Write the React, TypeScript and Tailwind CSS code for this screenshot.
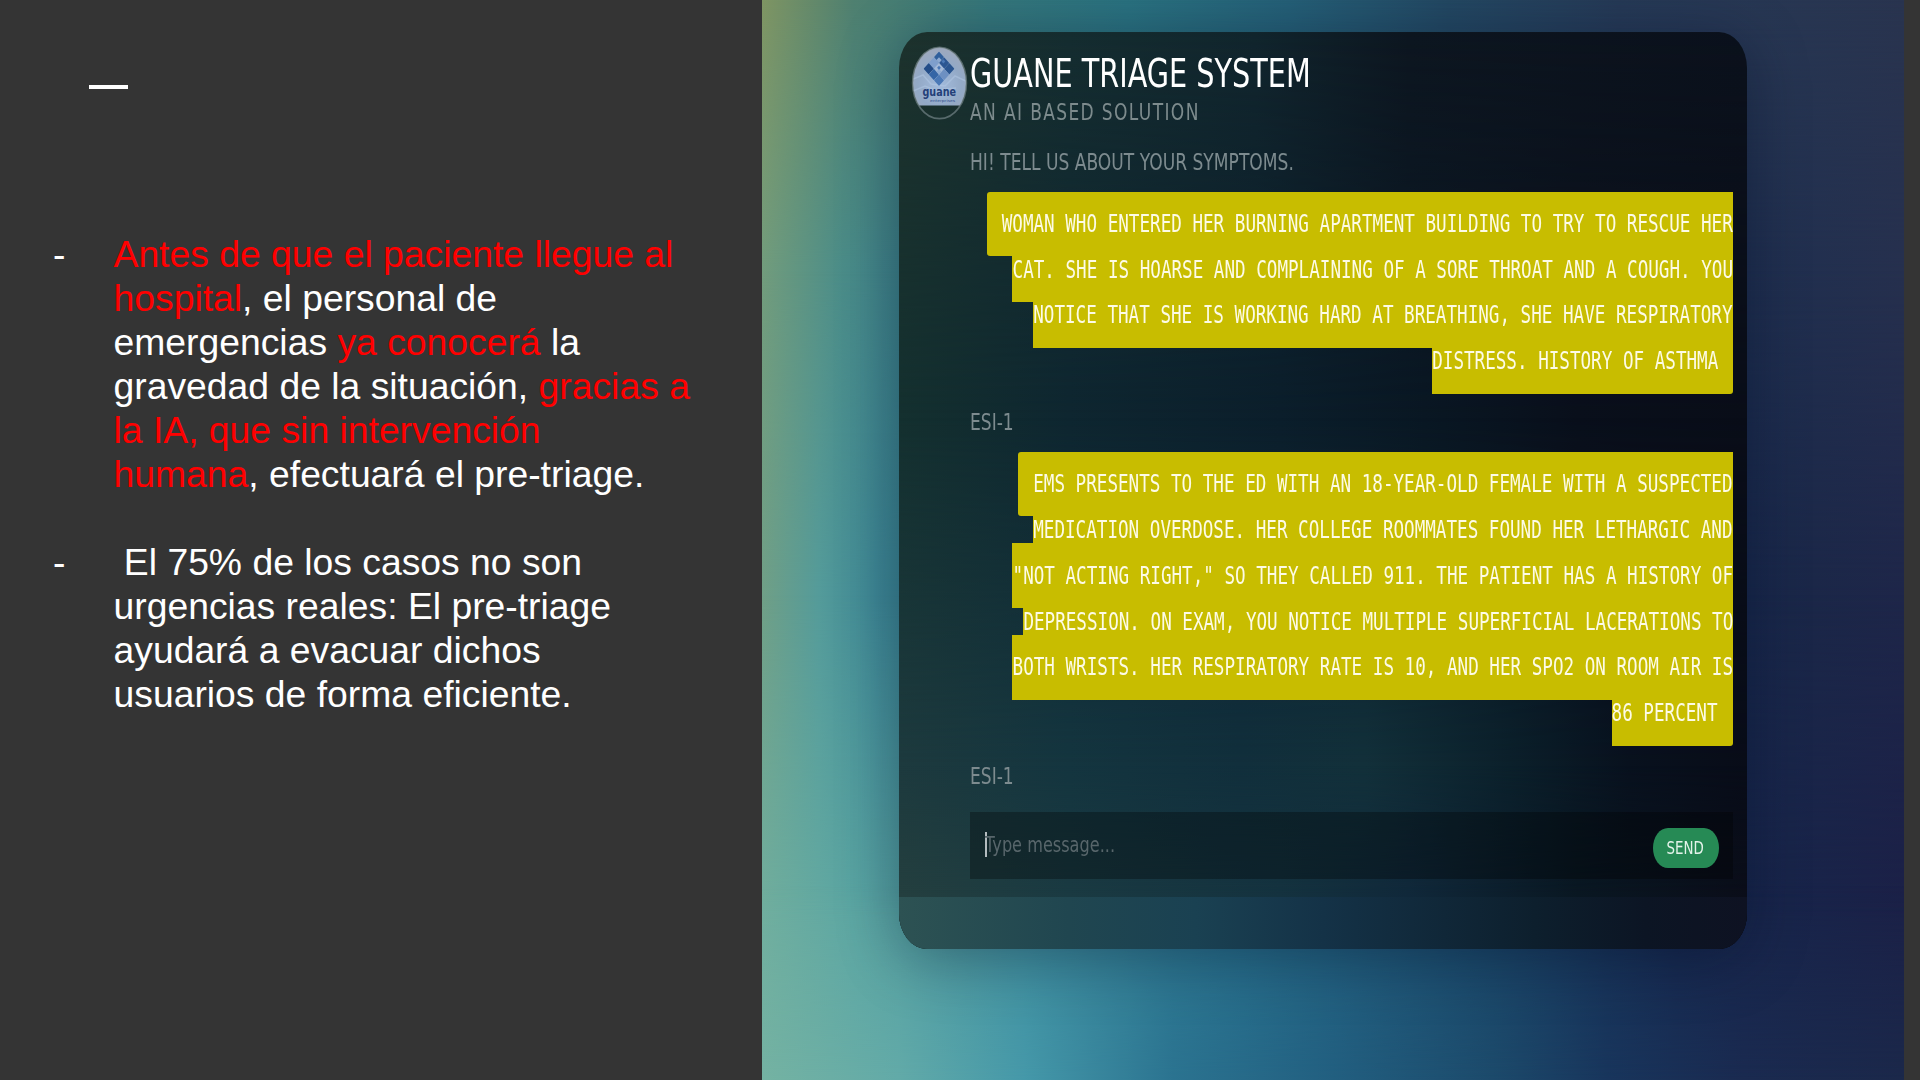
import React from "react";

const SANS = "font-['DejaVu_Sans',sans-serif]";

/* Horizontal colour rows, blended vertically through masks */
function SlideBackdrop() {
  return (
    <div className="absolute inset-0">
      <div className="absolute inset-0 bg-[linear-gradient(to_right,#7f9563_0%,#4f8070_8%,#35777b_20%,#2a7280_32%,#256078_46%,#234863_60%,#263a57_75%,#29344f_100%)]" />
      <div className="absolute inset-0 bg-[linear-gradient(to_right,#729c7c_0%,#4b8d89_7%,#2f7488_16%,#1f5a70_40%,#1c3a58_70%,#1e2f50_85%,#26304e_100%)] [mask-image:linear-gradient(to_bottom,transparent_0%,black_25%)]" />
      <div className="absolute inset-0 bg-[linear-gradient(to_right,#709f86_0%,#549b9a_5%,#3d8795_10%,#2b7088_20%,#1c4a60_50%,#17284c_85%,#1b2748_92%,#1e2649_100%)] [mask-image:linear-gradient(to_bottom,transparent_25%,black_55%)]" />
      <div className="absolute inset-0 bg-[linear-gradient(to_right,#70ae9e_0%,#5ba6a3_8%,#3c8b9c_25%,#27708c_42%,#1b4a6c_62%,#16284e_80%,#18244a_90%,#1b2047_100%)] [mask-image:linear-gradient(to_bottom,transparent_55%,black_85%)]" />
      <div className="absolute inset-0 bg-[linear-gradient(to_right,#74b2a2_0%,#62aaa8_12%,#4598a9_23%,#2b7390_36%,#225f80_50%,#1c4a6b_64%,#18355c_74%,#1a2a50_86%,#1b284a_100%)] [mask-image:linear-gradient(to_bottom,transparent_82%,black_100%)]" />
    </div>
  );
}

function CardBackdrop() {
  return (
    <div className="absolute inset-0">
      <div className="absolute inset-0 bg-[linear-gradient(to_right,#1d322d_0%,#152d30_20%,#11252d_42%,#0d1620_60%,#0b111c_100%)]" />
      <div className="absolute inset-0 bg-[linear-gradient(to_right,#14302f_0%,#0e2630_20%,#0b1e2b_45%,#091723_62%,#090f1b_80%,#090d18_100%)] [mask-image:linear-gradient(to_bottom,transparent_0%,black_42%)]" />
      <div className="absolute inset-0 bg-[linear-gradient(to_right,#1d3a3e_0%,#14353f_20%,#112f3c_40%,#12303a_55%,#0b202b_72%,#08111e_86%,#080c18_100%)] [mask-image:linear-gradient(to_bottom,transparent_42%,black_80%)]" />
      <div className="absolute inset-0 bg-[linear-gradient(to_right,#243f3f_0%,#1a3a42_20%,#14323f_45%,#10283a_60%,#091722_80%,#0a0d19_100%)] [mask-image:linear-gradient(to_bottom,transparent_80%,black_94%)]" />
    </div>
  );
}

function GuaneLogo() {
  const cells: [number, number, string][] = [
    [0, 0, "#2f5f9c"], [1, 0, "#2b5692"], [2, 0, "#2a5590"],
    [0, 1, "#7f9fcc"], [1, 1, "#a3b9d8"], [2, 1, "#6d90c2"],
    [0, 2, "#244d88"], [1, 2, "#3465a6"], [2, 2, "#4a78b6"],
  ];
  return (
    <svg className="h-[74px] w-[57px]" viewBox="0 0 57 74">
      <defs>
        <clipPath id="logo-disc"><ellipse cx="28.5" cy="37" rx="26.5" ry="35.5" /></clipPath>
        <radialGradient id="logo-fill" cx="50%" cy="65%" r="65%">
          <stop offset="0" stopColor="#a3bbdc" /><stop offset=".6" stopColor="#93a9c6" /><stop offset="1" stopColor="#a0a9bc" />
        </radialGradient>
      </defs>
      <g clipPath="url(#logo-disc)">
        <rect width="57" height="59.5" fill="url(#logo-fill)" />
        <path d="M0 34 L12 29 L20 38 L34 40 L44 30 L57 36 M2 45 L14 40 L24 44 L45 42" stroke="#b4c9e6" strokeWidth="1.5" opacity=".5" fill="none" />
      </g>
      <ellipse cx="28.5" cy="37" rx="26.8" ry="35.7" fill="none" stroke="#8d9aa0" strokeOpacity=".55" strokeWidth="1.8" />
      <g transform="translate(28 5.5) scale(.89 1) rotate(45)">
        {cells.map(([c, r, fill]) => (
          <rect key={`${c}${r}`} x={c * 8.2} y={r * 8.2} width="8" height="8" rx=".6" fill={fill} />
        ))}
        <path d="M4 4h4v4h-4z M12.3 12.3h4v4h-4z" fill="#8fabd2" />
        <path d="M10 10h3v3h-3z M9 2h3v3h-3z" fill="#4a78b6" />
      </g>
      <text x="11.5" y="49.8" fontFamily="DejaVu Sans" fontWeight="700" fontSize="11.8" textLength="33.5" lengthAdjust="spacingAndGlyphs" fill="#243f78">guane</text>
      <text x="19" y="56.2" fontFamily="DejaVu Sans" fontSize="3.8" textLength="25" lengthAdjust="spacingAndGlyphs" fill="#2f4f8c">enterprises</text>
    </svg>
  );
}

/* Outgoing message: every line carries its own highlight box */
function Bubble({ lines }: { lines: string[] }) {
  return (
    <div className="flex flex-col items-end font-['DejaVu_Sans_Mono',monospace] text-[24.5px] text-[#fdfbe6]">
      {lines.map((line, i) => {
        const first = i === 0;
        const last = i === lines.length - 1;
        return (
          <div
            key={line}
            className={`-mb-[18.5px] flex h-[64.4px] justify-end bg-[#c8bd00] ${first ? "rounded-l-[3px] pl-[15px]" : ""} ${last ? "rounded-br-[3px] pr-[15px]" : ""}`}
          >
            <div className="flex justify-end" style={{ width: line.length * 10.6 }}>
              <span className="origin-top-right scale-x-[0.7183] whitespace-pre pt-[12.2px] leading-[40px]">{line}</span>
            </div>
          </div>
        );
      })}
    </div>
  );
}

function Reply({ children }: { children: React.ReactNode }) {
  return (
    <p className="origin-left scale-x-[0.747] whitespace-nowrap text-[22.9px] leading-[28px] text-[#7d8b8f]">{children}</p>
  );
}

function ChatCard() {
  return (
    <div className={`relative ml-[137px] mt-8 h-[917px] w-[848px] shrink-0 rounded-[28px/36px] shadow-[0_10px_60px_rgba(0,10,30,0.34)] ${SANS}`}>
      <div className="absolute inset-0 overflow-hidden rounded-[28px/36px]"><CardBackdrop /></div>
      <div className="relative flex h-full flex-col">
        <div className="flex h-[865px] flex-col pl-[71px] pr-[14px]">
          <header className="relative h-[98px] pt-[18px]">
            <div className="absolute -left-[59px] top-[14px]"><GuaneLogo /></div>
            <h1 className="origin-left scale-x-[0.748] whitespace-nowrap text-[38.4px] leading-[48px] text-white">GUANE TRIAGE SYSTEM</h1>
            <p className="origin-left scale-x-[0.745] whitespace-nowrap text-[22.9px] leading-[29px] tracking-[1.83px] text-[#7d8b8d]">AN AI BASED SOLUTION</p>
          </header>
          <div className="h-[61.5px] pt-[18px]"><Reply>HI! TELL US ABOUT YOUR SYMPTOMS.</Reply></div>
          <Bubble
            lines={[
              "WOMAN WHO ENTERED HER BURNING APARTMENT BUILDING TO TRY TO RESCUE HER",
              "CAT. SHE IS HOARSE AND COMPLAINING OF A SORE THROAT AND A COUGH. YOU",
              "NOTICE THAT SHE IS WORKING HARD AT BREATHING, SHE HAVE RESPIRATORY",
              "DISTRESS. HISTORY OF ASTHMA",
            ]}
          />
          <div className="h-[76.6px] pt-[33px]"><Reply>ESI-1</Reply></div>
          <Bubble
            lines={[
              "EMS PRESENTS TO THE ED WITH AN 18-YEAR-OLD FEMALE WITH A SUSPECTED",
              "MEDICATION OVERDOSE. HER COLLEGE ROOMMATES FOUND HER LETHARGIC AND",
              "\"NOT ACTING RIGHT,\" SO THEY CALLED 911. THE PATIENT HAS A HISTORY OF",
              "DEPRESSION. ON EXAM, YOU NOTICE MULTIPLE SUPERFICIAL LACERATIONS TO",
              "BOTH WRISTS. HER RESPIRATORY RATE IS 10, AND HER SPO2 ON ROOM AIR IS",
              "86 PERCENT",
            ]}
          />
          <div className="h-[84.8px] pt-[34.5px]"><Reply>ESI-1</Reply></div>
          <div className="flex h-[67px] shrink-0 justify-between bg-black/30 pl-[14.5px] pr-[14.5px]">
            <div className="flex pt-[20px]">
              <div className="h-[25px] w-[2px] bg-[#b4bcbf]" />
              <span className="-ml-[2px] origin-left scale-x-[0.74] whitespace-nowrap text-[21.8px] leading-[25px] text-[#58666b]">Type message...</span>
            </div>
            <button className="mt-[16.5px] flex h-10 w-[66px] items-center justify-center rounded-[15px/20px] bg-[#268a55] pt-[1.5px] text-[17.3px] text-[#e4f3ea]">
              <span className="scale-x-[0.775]">SEND</span>
            </button>
          </div>
        </div>
        <div className="flex-1 rounded-b-[28px_36px] rounded-bl-[28px_36px] rounded-br-[28px_36px] bg-[linear-gradient(to_right,#2d5253_0%,#204650_20%,#1a4152_35%,#143247_50%,#0d1f2d_75%,#0c1524_88%,#0e1222_100%)]" />
      </div>
    </div>
  );
}

function Item({ children }: { children: React.ReactNode }) {
  return (
    <li className="flex">
      <span className="w-[60.5px] shrink-0">-</span>
      <div className="whitespace-pre">{children}</div>
    </li>
  );
}

export default function App() {
  return (
    <main className="flex h-[1080px] w-[1920px] overflow-hidden bg-[#343434]">
      <section className="w-[762px] shrink-0 font-['Liberation_Sans',Arial,sans-serif] text-[37.3px] leading-[44px] text-white">
        <div className="ml-[89px] mt-[85px] h-[4px] w-[39px] bg-white" />
        <ul className="ml-[53px] mt-[143px] flex flex-col gap-11">
          <Item>
            <p className="text-[#ff0000]">Antes de que el paciente llegue al</p>
            <p><span className="text-[#ff0000]">hospital</span>, el personal de</p>
            <p>emergencias <span className="text-[#ff0000]">ya conocerá</span> la</p>
            <p>gravedad de la situación, <span className="text-[#ff0000]">gracias a</span></p>
            <p className="text-[#ff0000]">la IA, que sin intervención</p>
            <p><span className="text-[#ff0000]">humana</span>, efectuará el pre-triage.</p>
          </Item>
          <Item>
            <p>{" El 75% de los casos no son"}</p>
            <p>urgencias reales: El pre-triage</p>
            <p>ayudará a evacuar dichos</p>
            <p>usuarios de forma eficiente.</p>
          </Item>
        </ul>
      </section>
      <section className="relative flex w-[1142px] shrink-0 items-start overflow-hidden">
        <SlideBackdrop />
        <ChatCard />
      </section>
    </main>
  );
}
